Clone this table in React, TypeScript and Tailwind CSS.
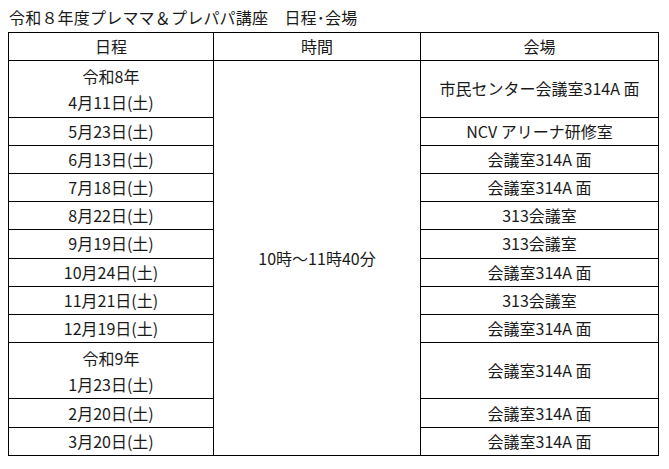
const rows: { date: string[]; venue: string; tall?: boolean }[] = [
  { date: ["令和8年", "4月11日(土)"], venue: "市民センター会議室314A 面", tall: true },
  { date: ["5月23日(土)"], venue: "NCV アリーナ研修室" },
  { date: ["6月13日(土)"], venue: "会議室314A 面" },
  { date: ["7月18日(土)"], venue: "会議室314A 面" },
  { date: ["8月22日(土)"], venue: "313会議室" },
  { date: ["9月19日(土)"], venue: "313会議室" },
  { date: ["10月24日(土)"], venue: "会議室314A 面" },
  { date: ["11月21日(土)"], venue: "313会議室" },
  { date: ["12月19日(土)"], venue: "会議室314A 面" },
  { date: ["令和9年", "1月23日(土)"], venue: "会議室314A 面", tall: true },
  { date: ["2月20日(土)"], venue: "会議室314A 面" },
  { date: ["3月20日(土)"], venue: "会議室314A 面" },
];

const cell = "border border-black text-center align-middle p-0 leading-[25px]";

export default function App() {
  return (
    <div
      className="h-[469px] w-[669px] overflow-hidden bg-white pl-2 pt-[5px] text-[#1a1a1a]"
      style={{ fontFamily: '"Noto Sans CJK JP", "Noto Sans", sans-serif' }}
    >
      <h1 className="h-[27px] pl-px text-[16px] leading-[25px] tracking-[0.2px]">
        令和８年度プレママ＆プレパパ講座　日程･会場
      </h1>
      <table className="w-[650px] table-fixed border-collapse text-[16px]">
        <colgroup>
          <col className="w-[205px]" />
          <col className="w-[207px]" />
          <col className="w-[238px]" />
        </colgroup>
        <thead>
          <tr className="h-[28.2px]">
            <th className={`${cell} font-normal`}>日程</th>
            <th className={`${cell} font-normal`}>時間</th>
            <th className={`${cell} font-normal`}>会場</th>
          </tr>
        </thead>
        <tbody>
          {rows.map((r, i) => (
            <tr key={i} className={r.tall ? "h-[56.4px]" : "h-[28.2px]"}>
              <td className={cell}>
                {r.date.map((d) => (
                  <div key={d} className={r.tall ? "leading-[26px]" : ""}>
                    {d}
                  </div>
                ))}
              </td>
              {i === 0 && (
                <td className={cell} rowSpan={rows.length}>
                  10時～11時40分
                </td>
              )}
              <td className={cell}>{r.venue}</td>
            </tr>
          ))}
        </tbody>
      </table>
    </div>
  );
}
